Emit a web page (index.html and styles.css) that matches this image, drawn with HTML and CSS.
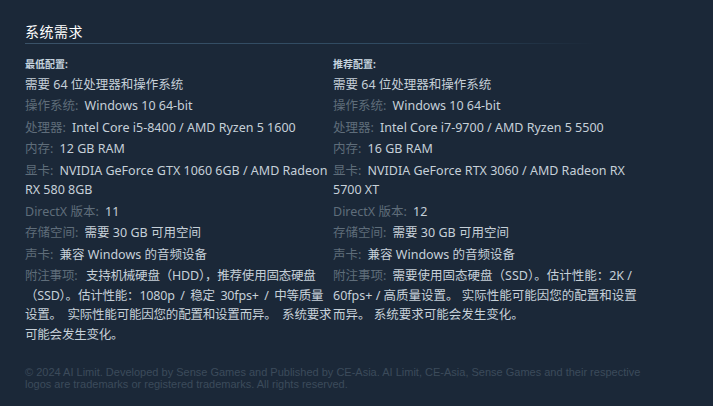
FILE: index.html
```html
<!DOCTYPE html>
<html lang="zh">
<head>
<meta charset="utf-8">
<link rel="stylesheet" href="styles.css">
</head>
<body>
<div class="page">
  <div class="sysreq">
    <h2 class="title">系统需求</h2>
    <div class="cols">
      <div class="col">
        <div class="head">最低配置:</div>
        <ul>
          <li>需要 64 位处理器和操作系统</li>
          <li><span class="lbl">操作系统:</span> Windows 10 64-bit</li>
          <li><span class="lbl">处理器:</span> Intel Core i5-8400 / AMD Ryzen 5 1600</li>
          <li><span class="lbl">内存:</span> 12 GB RAM</li>
          <li><span class="lbl">显卡:</span> NVIDIA GeForce GTX 1060 6GB / AMD Radeon RX 580 8GB</li>
          <li><span class="lbl">DirectX 版本:</span> 11</li>
          <li><span class="lbl">存储空间:</span> 需要 30 GB 可用空间</li>
          <li><span class="lbl">声卡:</span> 兼容 Windows 的音频设备</li>
          <li class="notes notes-min"><span class="lbl">附注事项:</span> 支持机械硬盘（HDD），推荐使用固态硬盘（SSD）。估计性能：1080p / 稳定 30fps+ / 中等质量设置。 实际性能可能因您的配置和设置而异。 系统要求可能会发生变化。</li>
        </ul>
      </div>
      <div class="col">
        <div class="head">推荐配置:</div>
        <ul>
          <li>需要 64 位处理器和操作系统</li>
          <li><span class="lbl">操作系统:</span> Windows 10 64-bit</li>
          <li><span class="lbl">处理器:</span> Intel Core i7-9700 / AMD Ryzen 5 5500</li>
          <li><span class="lbl">内存:</span> 16 GB RAM</li>
          <li><span class="lbl">显卡:</span> NVIDIA GeForce RTX 3060 / AMD Radeon RX 5700 XT</li>
          <li><span class="lbl">DirectX 版本:</span> 12</li>
          <li><span class="lbl">存储空间:</span> 需要 30 GB 可用空间</li>
          <li><span class="lbl">声卡:</span> 兼容 Windows 的音频设备</li>
          <li class="notes"><span class="lbl">附注事项:</span> 需要使用固态硬盘（SSD）。估计性能：2K / 60fps+ / 高质量设置。 实际性能可能因您的配置和设置而异。 系统要求可能会发生变化。</li>
        </ul>
      </div>
    </div>
  </div>
  <p class="legal">© 2024 AI Limit. Developed by Sense Games and Published by CE-Asia. AI Limit, CE-Asia, Sense Games and their respective logos are trademarks or registered trademarks. All rights reserved.</p>
</div>
</body>
</html>
```

FILE: styles.css
```css
html, body {
  margin: 0;
  padding: 0;
  background: #1b2838;
}
body {
  font-family: "Noto Sans", "Noto Sans CJK SC", sans-serif;
  color: #acb2b8;
  width: 713px;
  height: 406px;
  overflow: hidden;
}
.page {
  padding: 22px 0 0 25px;
  width: 620px;
}
.title {
  margin: 0;
  font-size: 14px;
  font-weight: normal;
  color: #ffffff;
  line-height: 20px;
  letter-spacing: 0.5px;
  padding-bottom: 2px;
  background-image: linear-gradient(to right, #3a5268 0%, #2f4a61 60%, rgba(47,74,97,0) 92%);
  background-size: 100% 1px;
  background-repeat: no-repeat;
  background-position: left bottom;
}
.cols {
  display: flex;
  gap: 3px;
  padding-top: 13px;
}
.col {
  width: 305px;
}
.head {
  font-size: 10px;
  font-weight: bold;
  color: #c6d4df;
  line-height: 14px;
  margin-bottom: 4px;
}
ul {
  list-style: none;
  margin: 0;
  padding: 0;
}
li {
  font-size: 12.5px;
  line-height: 19.5px;
  margin-bottom: 1.95px;
  color: #c6d0d8;
}
.notes-min {
  letter-spacing: -0.2px;
  word-spacing: 2.5px;
  margin-right: -4px;
}
.lbl {
  color: #5f6d7a;
  margin-right: 3px;
}
.legal {
  margin: 20px 0 0;
  font-family: "Liberation Sans", Arial, sans-serif;
  font-size: 11px;
  line-height: 12.5px;
  color: #3c4b5b;
  width: 620px;
}
```
